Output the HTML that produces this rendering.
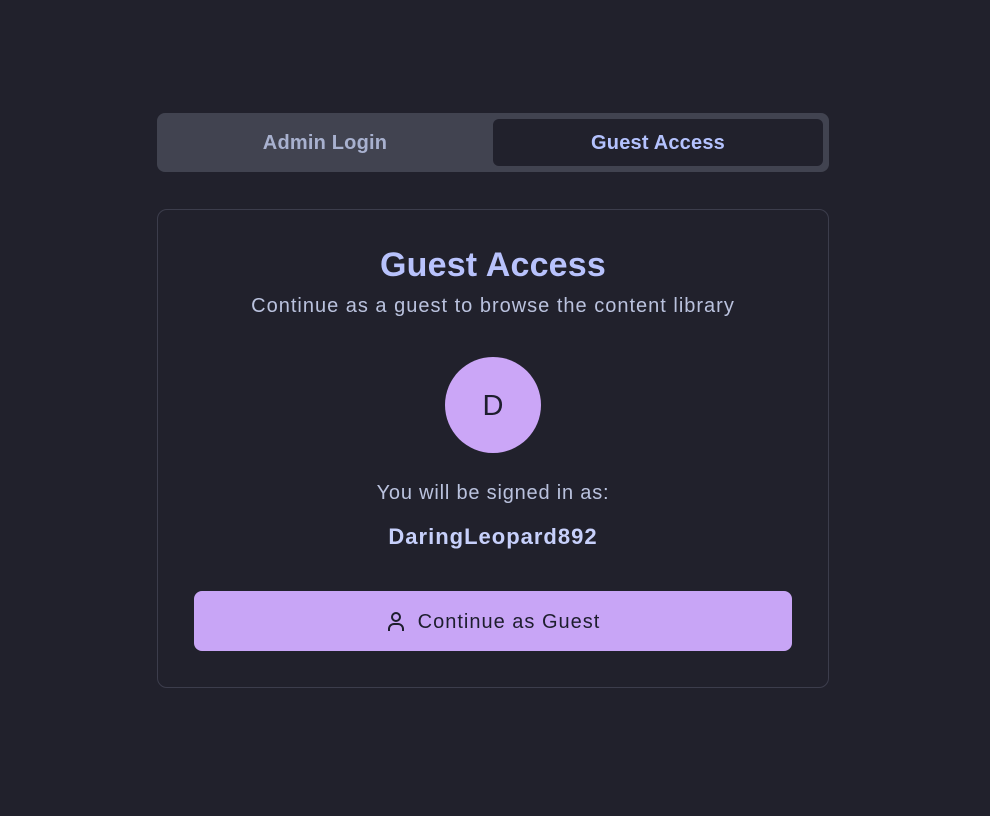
<!DOCTYPE html>
<html><head><style>
*{margin:0;padding:0;box-sizing:border-box}
body{width:990px;height:816px;background:#21212c;font-family:"Liberation Sans",sans-serif;position:relative;overflow:hidden}
.tabs{position:absolute;left:157px;top:113px;width:672px;height:59px;background:#414350;border-radius:8px}
.t{position:absolute;top:6px;height:47px;line-height:49px;text-align:center;font-size:20px;font-weight:600;letter-spacing:0.2px}
.t1{left:0;width:336px;color:#a8b1cf}
.t2{left:336px;width:330px;background:#21212c;border-radius:6px;color:#b4c2fe}
.card{position:absolute;left:157px;top:209px;width:672px;height:479px;border:1px solid #3c3d4c;border-radius:10px}
.c{position:absolute;left:0;width:100%;text-align:center}
h1{font-size:34px;font-weight:700;color:#b8c2fc;top:36px;letter-spacing:0.2px}
.sub{top:85px;font-size:20px;color:#bac2de;letter-spacing:1px}
.av{position:absolute;left:287px;top:147px;width:96px;height:96px;border-radius:50%;background:#cba6f7;color:#1e1e2e;font-size:29px;text-align:center;line-height:98px}
.will{top:272px;font-size:20px;color:#bac2de;letter-spacing:0.8px}
.name{top:314px;font-size:22px;font-weight:700;color:#c7d0fb;letter-spacing:1px}
.btn{position:absolute;left:36px;top:381px;width:598px;height:60px;background:#c8a5f6;border-radius:8px;color:#1e1e2e;font-size:20px;display:flex;align-items:center;justify-content:center;gap:12px;letter-spacing:1px;padding-top:2px}
</style></head><body>
<div class="tabs"><div class="t t1">Admin Login</div><div class="t t2">Guest Access</div></div>
<div class="card">
<h1 class="c">Guest Access</h1>
<div class="c sub">Continue as a guest to browse the content library</div>
<div class="av">D</div>
<div class="c will">You will be signed in as:</div>
<div class="c name">DaringLeopard892</div>
<div class="btn"><svg width="20" height="22" viewBox="0 0 20 22" fill="none" stroke="#1e1e2e" stroke-width="2"><circle cx="10" cy="6" r="4"/><path d="M3 20v-2a5 5 0 0 1 5-5h4a5 5 0 0 1 5 5v2"/></svg><span>Continue as Guest</span></div>
</div>
</body></html>
